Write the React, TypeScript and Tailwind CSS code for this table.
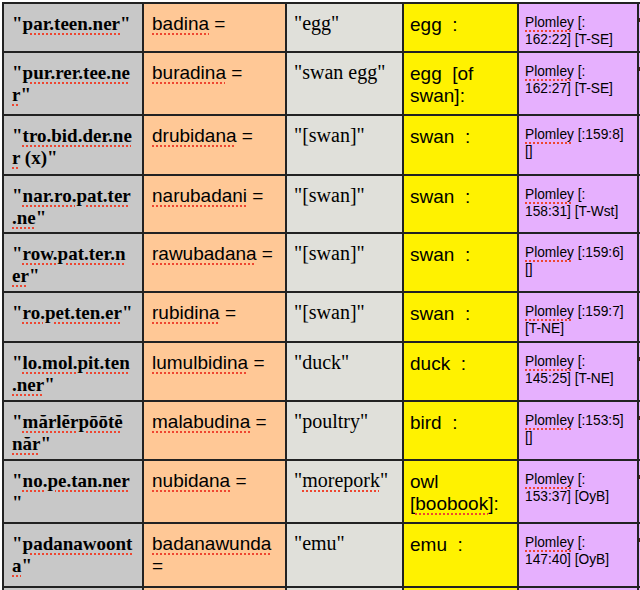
import React from 'react';

// spellcheck squiggle under a word
const S: React.FC<{ children: React.ReactNode }> = ({ children }) => (
  <span className="underline decoration-dotted decoration-[#ee4630] decoration-2 underline-offset-[3px]">{children}</span>
);

type Row = {
  h: string;
  word: React.ReactNode;
  form: React.ReactNode;
  gloss: React.ReactNode;
  eng: React.ReactNode;
  src: React.ReactNode;
  mark?: boolean;
};

const rows: Row[] = [
  {
    h: 'h-[47px]',
    word: <>"<S>par.teen.ner</S>"</>,
    form: <><S>badina</S> =</>,
    gloss: <>"egg"</>,
    eng: <>egg&nbsp; :</>,
    src: <><S>Plomley</S> [:<br />162:22] [T-SE]</>,
    mark: true,
  },
  {
    h: 'h-[61px]',
    word: <>"<S>pur.rer.tee.ne</S><br /><S>r</S>"</>,
    form: <><S>buradina</S> =</>,
    gloss: <>"swan egg"</>,
    eng: <>egg&nbsp; [of<br />swan]:</>,
    src: <><S>Plomley</S> [:<br />162:27] [T-SE]</>,
    mark: true,
  },
  {
    h: 'h-[58px]',
    word: <>"<S>tro.bid.der.ne</S><br /><S>r</S> (x)"</>,
    form: <><S>drubidana</S> =</>,
    gloss: <>"[swan]"</>,
    eng: <>swan&nbsp; :</>,
    src: <><S>Plomley</S> [:159:8]<br />[]</>,
  },
  {
    h: 'h-[56px]',
    word: <>"<S>nar.ro.pat.ter</S><br /><S>.ne</S>"</>,
    form: <><S>narubadani</S> =</>,
    gloss: <>"[swan]"</>,
    eng: <>swan&nbsp; :</>,
    src: <><S>Plomley</S> [:<br />158:31] [T-Wst]</>,
  },
  {
    h: 'h-[57px]',
    word: <>"<S>row.pat.ter.n</S><br /><S>er</S>"</>,
    form: <><S>rawubadana</S> =</>,
    gloss: <>"[swan]"</>,
    eng: <>swan&nbsp; :</>,
    src: <><S>Plomley</S> [:159:6]<br />[]</>,
  },
  {
    h: 'h-[48px]',
    word: <>"<S>ro.pet.ten.er</S>"</>,
    form: <><S>rubidina</S> =</>,
    gloss: <>"[swan]"</>,
    eng: <>swan&nbsp; :</>,
    src: <><S>Plomley</S> [:159:7]<br />[T-NE]</>,
  },
  {
    h: 'h-[57px]',
    word: <>"<S>lo.mol.pit.ten</S><br /><S>.ner</S>"</>,
    form: <><S>lumulbidina</S> =</>,
    gloss: <>"duck"</>,
    eng: <>duck&nbsp; :</>,
    src: <><S>Plomley</S> [:<br />145:25] [T-NE]</>,
    mark: true,
  },
  {
    h: 'h-[57px]',
    word: <>"<S>mărlĕrpōōtĕ</S><br /><S>năr</S>"</>,
    form: <><S>malabudina</S> =</>,
    gloss: <>"poultry"</>,
    eng: <>bird&nbsp; :</>,
    src: <><S>Plomley</S> [:153:5]<br />[]</>,
    mark: true,
  },
  {
    h: 'h-[61px]',
    word: <>"<S>no.pe.tan.ner</S><br />"</>,
    form: <><S>nubidana</S> =</>,
    gloss: <>"<S>morepork</S>"</>,
    eng: <>owl<br />[<S>boobook</S>]:</>,
    src: <><S>Plomley</S> [:<br />153:37] [OyB]</>,
    mark: true,
  },
  {
    h: 'h-[62px]',
    word: <>"<S>padanawoont</S><br /><S>a</S>"</>,
    form: <><S>badanawunda</S><br />=</>,
    gloss: <>"emu"</>,
    eng: <>emu&nbsp; :</>,
    src: <><S>Plomley</S> [:<br />147:40] [OyB]</>,
    mark: true,
  },
];

const serif = "font-['Liberation_Serif','Times_New_Roman',serif]";
const sans = "font-['Liberation_Sans',Arial,sans-serif]";

export default function App() {
  return (
    <div className="w-[640px] h-[590px] overflow-hidden bg-white pt-[2px] pl-[2px] text-black">
      <div className="grid grid-cols-[138px_141px_115px_113px_118px_20px] gap-[2px] bg-[#222] p-[2px] w-max">
        {rows.map((r, i) => (
          <React.Fragment key={i}>
            <div className={`${r.h} bg-[#c8c8c8] px-[8px] pt-[9px] ${serif} font-bold text-[19px] leading-[22px] whitespace-nowrap`}>
              {r.word}
            </div>
            <div className={`${r.h} bg-[#ffc896] px-[8px] pt-[9px] ${sans} text-[19px] leading-[22px] whitespace-nowrap`}>
              {r.form}
            </div>
            <div className={`${r.h} bg-[#e0e0da] px-[7px] pt-[8px] ${serif} text-[20px] leading-[22px] whitespace-nowrap`}>
              {r.gloss}
            </div>
            <div className={`${r.h} bg-[#fff200] px-[6px] pt-[10px] ${sans} text-[19px] leading-[22px] whitespace-nowrap`}>
              {r.eng}
            </div>
            <div className={`${r.h} bg-[#e6b0fe] px-[6px] pt-[11px] ${sans} text-[13.75px] leading-[16.5px] whitespace-nowrap`}>
              {r.src}
            </div>
            <div className={`${r.h} bg-[#e6b0fe]`}>
              {r.mark && <div className="mt-[14px] w-[2px] h-[4px] bg-[#4a1f14]" />}
            </div>
          </React.Fragment>
        ))}
        <div className="h-[20px] bg-[#c8c8c8]" />
        <div className="h-[20px] bg-[#ffc896]" />
        <div className="h-[20px] bg-[#e0e0da]" />
        <div className="h-[20px] bg-[#fff200]" />
        <div className="h-[20px] bg-[#e6b0fe]" />
        <div className="h-[20px] bg-[#e6b0fe]" />
      </div>
    </div>
  );
}
